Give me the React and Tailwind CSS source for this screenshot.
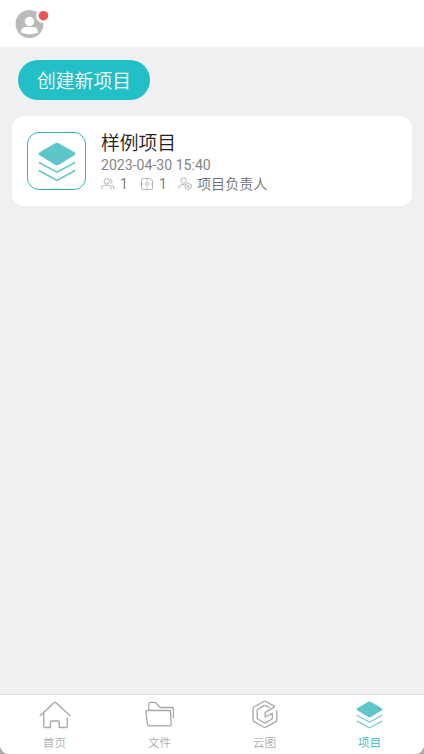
const font = "font-['Roboto','Noto_Sans_CJK_SC',sans-serif]";

function Layers({ className }) {
  return (
    <svg viewBox="0 0 38 40" fill="none" className={className}>
      <path d="M17.2 1.2Q19 .4 20.8 1.2L36 9.9Q38.9 11.7 36 13.5L20.8 22.8Q19 23.8 17.2 22.8L2 13.5Q-.9 11.7 2 9.9Z" fill="#5cc6ca" />
      <path d="M.8 20.3L19 30.2L37.2 20.3M.8 28.5L19 38.4L37.2 28.5" stroke="#5cc6ca" strokeWidth="1.5" />
    </svg>
  );
}

function HomeIcon() {
  return (
    <svg viewBox="0 0 32 32" fill="none" stroke="#a6a6a8" strokeWidth="1.3" strokeLinejoin="round" className="size-8">
      <path d="M.8 17L15 3.8Q16 3 17 3.8L31.4 17" />
      <path d="M4.8 14V27Q4.8 28.5 6.3 28.5H11.5V23Q11.5 22 12.5 22H19.2Q20.2 22 20.2 23V28.5H27Q28.3 28.5 28.3 27V18.8" />
    </svg>
  );
}

function FilesIcon() {
  return (
    <svg viewBox="0 0 32 32" fill="none" stroke="#a6a6a8" strokeWidth="1.3" strokeLinejoin="round" className="size-8">
      <path d="M4.8 11V4.6Q4.8 3.4 6 3.4H10.5Q11.6 3.4 12.3 4.2L15.4 7.8Q16 8.5 17 8.5H28.4Q29.4 8.5 29.4 9.7V19.3" />
      <path d="M3 11.5H25Q26.4 11.5 26.5 12.8L27.2 25.4Q27.3 26.9 25.9 26.9H4.9Q3.6 26.9 3.5 25.5L1.8 12.8Q1.7 11.5 3 11.5Z" />
    </svg>
  );
}

function CloudIcon() {
  return (
    <svg viewBox="0 0 32 32" fill="none" stroke="#a6a6a8" strokeWidth="1.3" strokeLinejoin="round" className="size-8">
      <path d="M26 7.6L17 2.5Q15.8 1.9 14.6 2.5L5 8Q4 8.6 4 9.8V20.8Q4 22 5 22.6L14.8 28.3Q15.8 28.9 16.8 28.3L26.8 22.6Q27.8 22 27.8 20.8V11.2" />
      <path d="M26 7.6L16.2 13.4V18L23.3 14.2V18.9Q23.3 19.8 22.6 20.3L16.6 23.8Q15.8 24.3 15 23.8L9 20.3Q8.2 19.8 8.2 18.9V11.7Q8.2 10.7 9 10.2L15 6.6Q15.8 6.2 16.6 6.6L20.6 8.8" />
    </svg>
  );
}

function MembersIcon() {
  return (
    <svg viewBox="0 0 14 14" fill="none" stroke="#aaa" strokeWidth=".9" className="size-3.5">
      <circle cx="5.7" cy="4.3" r="2.7" />
      <path d="M.8 12.2V11Q.8 8.2 3.6 8.2H7.4Q10 8.2 10 11V12.2M8.6 1.6A2.7 2.7 0 0 1 9.3 6.8M10.5 8.2Q13 8.4 13 12.2" />
    </svg>
  );
}

function DrawingIcon() {
  return (
    <svg viewBox="0 0 14 14" fill="none" stroke="#aaa" strokeWidth=".9" className="size-3.5">
      <path d="M2.5 1.5H10L12.5 4V11.5Q12.5 12.5 11.5 12.5H2.5Q1.5 12.5 1.5 11.5V2.5Q1.5 1.5 2.5 1.5ZM7 1.5V3.6M7 10.4V12.5M1.5 7H3.2M10.8 7H12.5" />
      <circle cx="7" cy="7" r="1.6" />
    </svg>
  );
}

function RoleIcon() {
  return (
    <svg viewBox="0 0 14 14" fill="none" stroke="#aaa" strokeWidth=".9" className="size-3.5">
      <circle cx="5.6" cy="3.6" r="2.7" />
      <path d="M.6 11.8Q.6 8.2 4 7.6L7.2 7.1" />
      <path d="M10.3 6.2L13.2 7.8V11L10.3 12.6L7.4 11V7.8Z" />
      <circle cx="10.3" cy="9.4" r=".9" />
    </svg>
  );
}

const tabs = [
  { label: "首页", icon: <HomeIcon /> },
  { label: "文件", icon: <FilesIcon /> },
  { label: "云图", icon: <CloudIcon /> },
  { label: "项目", icon: <Layers className="h-[28px] w-[27px] mt-[2px]" />, active: true },
];

export default function App() {
  return (
    <div className="h-[754px] w-[424px] overflow-hidden bg-[#a9abad]">
      <div className={`flex h-full flex-col overflow-hidden rounded-b-[9px] bg-[#eef0f2] ${font}`}>
        <header className="h-[47px] shrink-0 bg-white pl-[15px] pt-[9px]">
          <svg viewBox="0 0 36 32" className="h-8 w-9">
            <circle cx="14.5" cy="15" r="14" fill="#bababa" />
            <circle cx="14.5" cy="12.5" r="4.7" fill="#fff" />
            <path d="M6 23.5Q6 18 11 18H18Q23 18 23 23.5Q19.5 25.3 14.5 25.3Q9.5 25.3 6 23.5Z" fill="#fff" />
            <circle cx="28.5" cy="6.7" r="7.4" fill="#fff" />
            <circle cx="28.5" cy="6.7" r="4.8" fill="#f15353" />
          </svg>
        </header>

        <main className="flex-1 px-3 pt-[13px]">
          <button className="ml-[6px] block h-10 w-[132px] rounded-full bg-[#23bfc6] pt-[2px] text-[18.8px] font-[350] leading-[41px] text-white">
            创建新项目
          </button>

          <div className="mt-4 flex h-[90px] rounded-xl bg-white pl-[15px] pt-4">
            <div className="flex h-[58px] w-[59px] shrink-0 justify-center rounded-[12px] border border-[#35b5bd] pt-[9px]">
              <Layers className="h-10 w-[38px]" />
            </div>
            <div className="ml-[15px]">
              <h2 className="h-6 text-[18.8px] font-[350] leading-[25px] text-[#222]">样例项目</h2>
              <p className="h-[18px] text-[14.1px] leading-[19px] text-[#858585]">2023-04-30 15:40</p>
              <div className="flex h-[20px] items-center text-[14.1px] font-[350] leading-[20px] text-[#707070]">
                <MembersIcon />
                <span className="ml-[5px] w-5 font-normal text-[#808080]">1</span>
                <DrawingIcon />
                <span className="ml-[5px] w-[19px] font-normal text-[#808080]">1</span>
                <RoleIcon />
                <span className="ml-[5px]">项目负责人</span>
              </div>
            </div>
          </div>
        </main>

        <nav className="grid h-15 shrink-0 grid-cols-4 border-t border-[#dcdee0] bg-white px-[2px]">
          {tabs.map((tab) => (
            <a key={tab.label} className="flex flex-col items-center pt-1">
              <span className="flex h-8 justify-center">{tab.icon}</span>
              <span className={tab.active ? "mt-1 text-[11.7px] font-[350] leading-4 text-[#31bbc2]" : "mt-1 text-[11.7px] font-light leading-4 text-[#8f9196]"}>
                {tab.label}
              </span>
            </a>
          ))}
        </nav>
      </div>
    </div>
  );
}
